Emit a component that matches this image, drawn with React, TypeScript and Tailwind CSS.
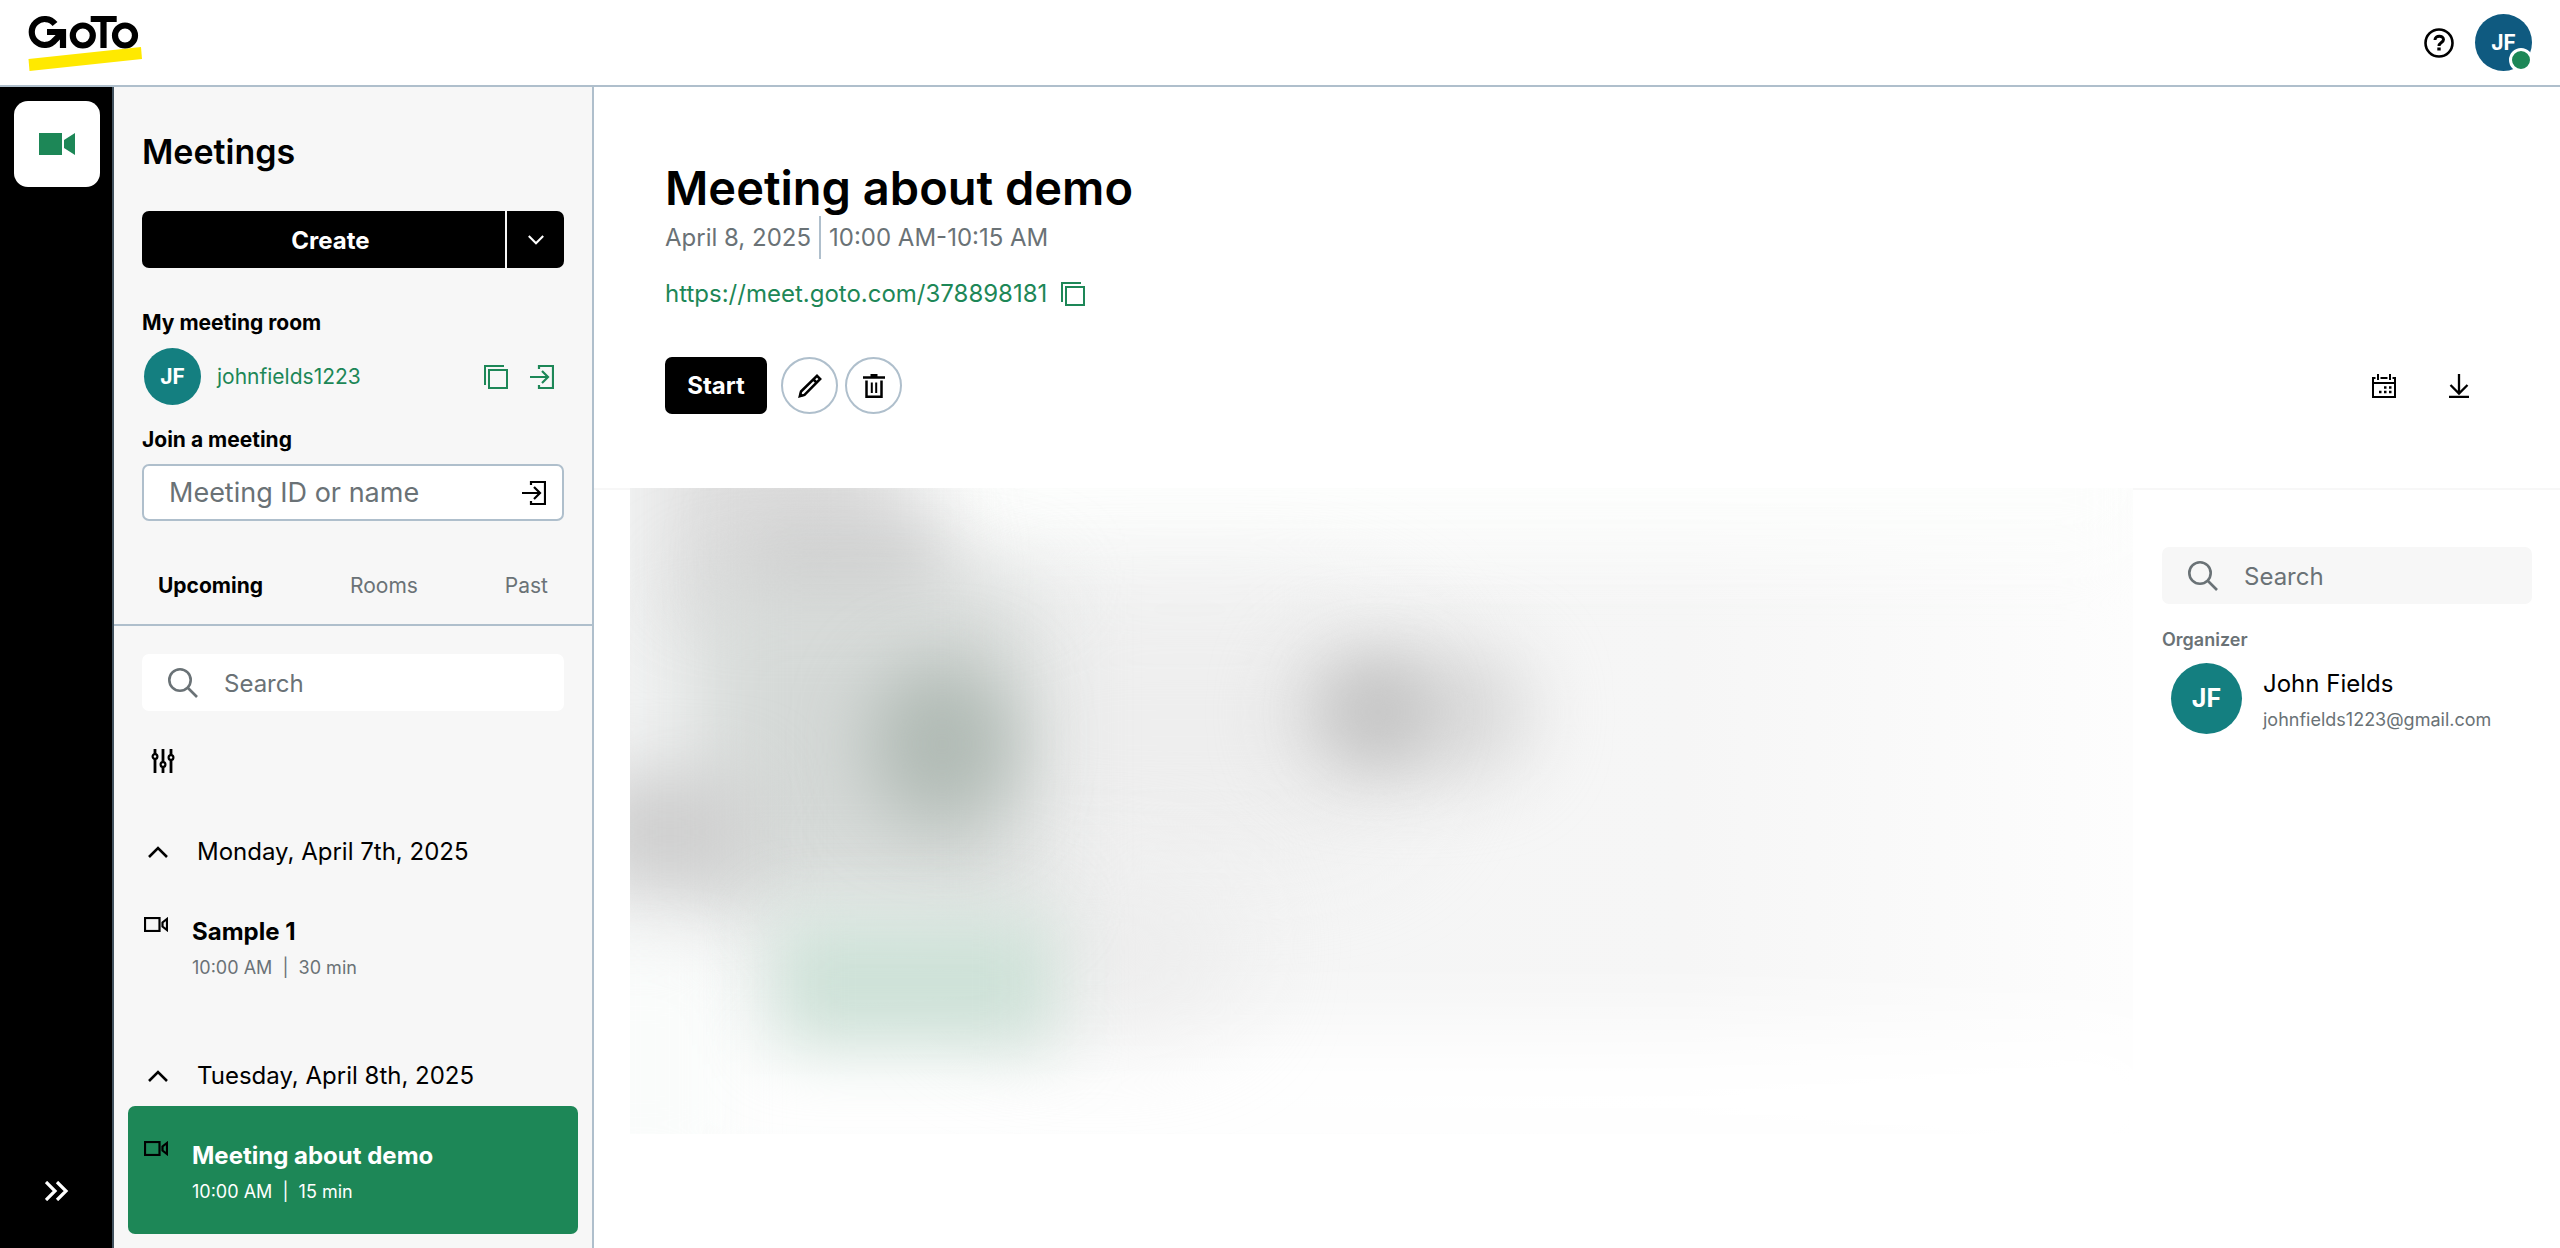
import type { ReactNode } from "react";

type IconProps = { className?: string };

function Logo() {
  return (
    <svg viewBox="0 0 114 58" className="h-[58px] w-[114px]" role="img" aria-label="GoTo">
      <path d="M0.500 45 L113 33 L114 45 L1.500 57 Z" fill="#ffe900" />
      <g fill="none" stroke="#000" strokeWidth="6.2">
        <path d="M27 10 A13 13 0 1 0 27 26 L35 18" />
        <path d="M19 18 H35 V34" />
        <circle cx="54.800" cy="21.500" r="10" />
        <path d="M62.700 5 H88.700 M75.500 5 V34" />
        <circle cx="97" cy="21.500" r="10" />
      </g>
    </svg>
  );
}

function HelpIcon({ className }: IconProps) {
  return (
    <svg viewBox="0 0 30 30" className={className} fill="none" stroke="currentColor" strokeWidth="2.6" aria-hidden="true">
      <circle cx="15" cy="15" r="13.500" />
      <path d="M11 12 C11 7 19.500 7 19.500 11.500 C19.500 14.500 15 14.500 15 18" strokeWidth="3" />
      <path d="M15 19.500 V22.500" strokeWidth="3.4" />
    </svg>
  );
}

function CopyIcon({ className }: IconProps) {
  return (
    <svg viewBox="0 0 24 24" className={className} fill="none" stroke="currentColor" strokeWidth="2" aria-hidden="true">
      <path d="M1 20 V1 H20" />
      <rect x="5" y="5" width="18" height="18" />
    </svg>
  );
}

function EnterIcon({ className }: IconProps) {
  return (
    <svg viewBox="0 0 24 24" className={className} fill="none" stroke="currentColor" strokeWidth="2.2" aria-hidden="true">
      <path d="M9 4 V1 H23 V23 H9 V20" />
      <path d="M0 12 H18 M12 6 L18 12 L12 18" />
    </svg>
  );
}

function SearchIcon({ className }: IconProps) {
  return (
    <svg viewBox="0 0 30 30" className={className} fill="none" stroke="currentColor" strokeWidth="2.6" aria-hidden="true">
      <circle cx="12" cy="12" r="10.700" />
      <path d="M19.500 19.500 L29 29" />
    </svg>
  );
}

function FilterIcon({ className }: IconProps) {
  return (
    <svg viewBox="0 0 24 24" className={className} fill="none" stroke="currentColor" strokeWidth="2.8" aria-hidden="true">
      <path d="M4 0 V5 M4 10 V24 M12 0 V13 M12 18 V24 M20 0 V6 M20 11 V24" />
      <circle cx="4" cy="7.500" r="2.400" strokeWidth="2.2" />
      <circle cx="12" cy="15.500" r="2.400" strokeWidth="2.2" />
      <circle cx="20" cy="8.500" r="2.400" strokeWidth="2.2" />
    </svg>
  );
}

function ChevronIcon({ className }: IconProps) {
  return (
    <svg viewBox="0 0 20 12" className={className} fill="none" stroke="currentColor" strokeWidth="2.6" aria-hidden="true">
      <path d="M1 11 L10 2 L19 11" />
    </svg>
  );
}

function DoubleChevronIcon({ className }: IconProps) {
  return (
    <svg viewBox="0 0 24 20" className={className} fill="none" stroke="currentColor" strokeWidth="3.2" aria-hidden="true">
      <path d="M1 1 L10 10 L1 19 M12 1 L21 10 L12 19" />
    </svg>
  );
}

function CameraOutlineIcon({ className }: IconProps) {
  return (
    <svg viewBox="0 0 24 15" className={className} fill="none" stroke="currentColor" strokeWidth="2.2" aria-hidden="true">
      <rect x="1" y="1" width="14.500" height="13" />
      <path d="M23 2 V13 L18.500 9.500 V5.500 Z" />
    </svg>
  );
}

function CameraIcon({ className }: IconProps) {
  return (
    <svg viewBox="0 0 36 22" className={className} fill="currentColor" aria-hidden="true">
      <path d="M0 0 H23 V22 H0 Z M25 7 L36 0 V22 L25 15 Z" />
    </svg>
  );
}

function PencilIcon({ className }: IconProps) {
  return (
    <svg viewBox="0 0 24 24" className={className} fill="none" stroke="currentColor" strokeWidth="2.5" aria-hidden="true">
      <path d="M1.800 22.200 L3 17.500 L19 1.800 L22.200 5 L6.500 21 Z M15.500 5.500 L18.500 8.500" />
      <path d="M1 23 L2 18 L6 22 Z" fill="currentColor" stroke="none" />
    </svg>
  );
}

function TrashIcon({ className }: IconProps) {
  return (
    <svg viewBox="0 0 24 24" className={className} fill="none" stroke="currentColor" strokeWidth="2.5" aria-hidden="true">
      <path d="M8.500 0 H15.500 V3 H8.500 Z" fill="currentColor" stroke="none" />
      <path d="M1 3.500 H23 M4.500 6.500 V22.800 H19.500 V6.500" />
      <path d="M9.800 8.500 V19 M14.200 8.500 V19" strokeWidth="2" />
    </svg>
  );
}

function CalendarIcon({ className }: IconProps) {
  return (
    <svg viewBox="0 0 24 24" className={className} fill="none" stroke="currentColor" strokeWidth="2" aria-hidden="true">
      <path d="M3.500 4 H1 V23 H23 V4 H20.500 M8.500 4 H15.500 M1 9 H23 M6 0 V6 M18 0 V6" />
      <path d="M12 13.500 H14.500 M17 13.500 H19.500 M7 18 H9.500 M12 18 H14.500 M17 18 H19.500" strokeWidth="2.5" />
    </svg>
  );
}

function DownloadIcon({ className }: IconProps) {
  return (
    <svg viewBox="0 0 20 24" className={className} fill="none" stroke="currentColor" strokeWidth="2.3" aria-hidden="true">
      <path d="M10 0 V19 M1.500 11 L10 19.500 L18.500 11 M0 22.800 H20" />
    </svg>
  );
}

function SearchBox({ id, label, className }: { id: string; label: string; className: string }) {
  return (
    <div className={`flex h-[57px] items-center gap-[26px] rounded-[7px] pl-[26px] ${className}`}>
      <SearchIcon className="h-[30px] w-[30px] shrink-0 text-[#6a7276]" />
      <input
        id={id}
        type="search"
        aria-label={label}
        placeholder="Search"
        className="h-full w-full min-w-0 bg-transparent pt-[2px] text-[24px] outline-none placeholder:text-[#6a7276]"
      />
    </div>
  );
}

function DayHeading({ children }: { children: ReactNode }) {
  return (
    <button type="button" className="flex h-10 w-full items-center gap-[29px] pl-5 text-left text-[24px]">
      <ChevronIcon className="h-3 w-5" />
      {children}
    </button>
  );
}

type MeetingProps = { title: string; time: string; length: string; selected?: boolean };

function MeetingCard({ title, time, length, selected }: MeetingProps) {
  return (
    <button
      type="button"
      className={`flex h-32 w-full items-start gap-6 rounded-[7px] px-4 pt-[34px] text-left ${
        selected ? "bg-[#1d8757] text-white" : "text-black"
      }`}
    >
      <CameraOutlineIcon className="mt-px h-[15px] w-6 text-black" />
      <span className="flex flex-col">
        <span className="text-[24px] leading-8 font-bold">{title}</span>
        <span className={`mt-2 text-[18px] leading-6 whitespace-pre ${selected ? "text-white" : "text-[#6a7276]"}`}>
          {time}  |  {length}
        </span>
      </span>
    </button>
  );
}

function BlurredPreview() {
  return (
    <div
      className="relative -mt-[2px] h-[646px] overflow-hidden bg-linear-to-r from-[#f3f4f4] from-0% via-[#f6f6f6] via-70% to-[#fdfdfd]"
      aria-hidden="true"
    >
      <div className="absolute -right-10 -bottom-10 left-0 h-36 bg-white blur-[45px]" />
      <div className="absolute -top-20 left-80 h-36 w-[1200px] bg-[#fcfdfc] blur-[40px]" />
      <div className="absolute top-28 left-80 h-64 w-[480px] rounded-full bg-[#eeeeee] blur-[50px]" />
      <div className="absolute top-[380px] left-80 h-40 w-72 rounded-full bg-[#ededed] blur-[50px]" />
      <div className="absolute -top-20 left-8 h-56 w-56 bg-[#dedede] blur-[35px]" />
      <div className="absolute top-6 left-28 h-28 w-52 rounded-full bg-[#d0d0d0] blur-[36px]" />
      <div className="absolute top-24 left-16 h-[320px] w-[340px] bg-[#d5d9d7] blur-[45px]" />
      <div className="absolute top-44 left-60 h-40 w-36 rounded-full bg-[#b0bab4] blur-[36px]" />
      <div className="absolute top-72 -left-10 h-28 w-40 bg-[#cecece] blur-[35px]" />
      <div className="absolute -bottom-10 -left-20 h-56 w-44 bg-[#fafcfb] blur-[35px]" />
      <div className="absolute top-[430px] left-36 h-32 w-[280px] bg-[#cde1d7] blur-[34px]" />
      <div className="absolute top-40 left-[660px] h-32 w-60 rounded-full bg-[#d8d8d8] blur-[38px]" />
      <div className="absolute top-44 left-[700px] h-24 w-24 rounded-full bg-[#c4c4c4] blur-[30px]" />
    </div>
  );
}

function Sidebar() {
  return (
    <aside className="flex w-[480px] shrink-0 flex-col border-r-2 border-[#afbfcc] bg-[#f7f7f7]">
      <div className="flex flex-col px-7">
        <h1 className="mt-[44px] text-[34px] leading-[42px] font-semibold">Meetings</h1>
        <div className="mt-[38px] flex h-[57px] gap-[2px]">
          <button type="button" className="flex-1 rounded-l-[7px] bg-black pt-[2px] pl-[14px] text-[24px] font-bold text-white">
            Create
          </button>
          <button type="button" aria-label="More create options" className="flex w-[57px] items-center justify-center rounded-r-[7px] bg-black text-white">
            <ChevronIcon className="h-[10px] w-4 rotate-180" />
          </button>
        </div>
        <h2 className="mt-[39px] text-[21px] leading-8 font-bold">My meeting room</h2>
        <div className="mt-[9px] flex h-[57px] items-center pl-[2px]">
          <span className="flex size-[57px] items-center justify-center rounded-full bg-[#147f80] text-[21px] font-bold text-white">
            JF
          </span>
          <a href="#room" className="ml-4 flex-1 text-[21px] text-[#1d8757]">
            johnfields1223
          </a>
          <button type="button" aria-label="Copy room link" className="text-[#1d8757]">
            <CopyIcon className="size-6" />
          </button>
          <button type="button" aria-label="Enter room" className="mr-[10px] ml-[22px] text-[#1d8757]">
            <EnterIcon className="size-6" />
          </button>
        </div>
        <label htmlFor="meeting-id" className="mt-[19px] text-[21px] leading-8 font-bold">
          Join a meeting
        </label>
        <div className="mt-2 flex h-[57px] items-center rounded-[7px] border-2 border-[#afbfcc] bg-white pr-4 pl-[25px]">
          <input
            id="meeting-id"
            type="text"
            placeholder="Meeting ID or name"
            className="h-full w-full min-w-0 bg-transparent text-[27px] outline-none placeholder:text-[#6a7276]"
          />
          <button type="button" aria-label="Join">
            <EnterIcon className="size-6" />
          </button>
        </div>
      </div>
      <nav className="mt-[26px] flex h-[77px] items-center justify-between px-11 text-[21px] text-[#6a7276]">
        <button type="button" className="font-bold text-black">Upcoming</button>
        <button type="button">Rooms</button>
        <button type="button">Past</button>
      </nav>
      <div className="border-t-2 border-[#afbfcc] px-[14px] pt-7">
        <div className="px-[14px]">
          <SearchBox id="meeting-search" label="Search meetings" className="bg-white" />
          <button type="button" aria-label="Filter" className="mt-[38px] ml-[9px] block">
            <FilterIcon className="size-6" />
          </button>
        </div>
        <div className="mt-[59px]">
          <DayHeading>Monday, April 7th, 2025</DayHeading>
          <div className="mt-[10px] mb-[46px]">
            <MeetingCard title="Sample 1" time="10:00 AM" length="30 min" />
          </div>
          <DayHeading>Tuesday, April 8th, 2025</DayHeading>
          <div className="mt-[10px]">
            <MeetingCard title="Meeting about demo" time="10:00 AM" length="15 min" selected />
          </div>
        </div>
      </div>
    </aside>
  );
}

function Details() {
  return (
    <main className="flex min-w-0 flex-1 flex-col">
      <section className="border-b-2 border-[#f7f7f7] pt-[72px] pr-[91px] pb-[74px] pl-[71px]">
        <h2 className="text-[47px] leading-[57px] font-semibold">Meeting about demo</h2>
        <div className="flex h-[43px] items-center gap-2 text-[24px] text-[#6a7276]">
          <span>April 8, 2025</span>
          <span className="h-full w-[2px] bg-[#afbfcc]" />
          <span>10:00 AM-10:15 AM</span>
        </div>
        <div className="mt-[15px] flex h-10 items-center gap-[14px] text-[24px] text-[#1d8757]">
          <a href="https://meet.goto.com/378898181">https://meet.goto.com/378898181</a>
          <button type="button" aria-label="Copy meeting link">
            <CopyIcon className="size-6" />
          </button>
        </div>
        <div className="mt-[43px] flex items-center">
          <button type="button" className="h-[57px] w-[102px] rounded-[7px] bg-black text-[24px] font-bold text-white">
            Start
          </button>
          <button type="button" aria-label="Edit" className="ml-[14px] flex size-[57px] items-center justify-center rounded-full border-2 border-[#afbfcc]">
            <PencilIcon className="size-6" />
          </button>
          <button type="button" aria-label="Delete" className="ml-[7px] flex size-[57px] items-center justify-center rounded-full border-2 border-[#afbfcc]">
            <TrashIcon className="size-6" />
          </button>
          <span className="flex-1" />
          <button type="button" aria-label="Add to calendar">
            <CalendarIcon className="size-6" />
          </button>
          <button type="button" aria-label="Download" className="ml-[53px]">
            <DownloadIcon className="h-6 w-5" />
          </button>
        </div>
      </section>
      <div className="flex flex-1">
        <div className="min-w-0 flex-1 pl-9">
          <BlurredPreview />
        </div>
        <section className="w-[427px] shrink-0 pt-[57px] pr-7 pl-[29px]">
          <SearchBox id="people-search" label="Search attendees" className="bg-[#f7f7f7]" />
          <h3 className="mt-6 text-[18px] leading-6 font-semibold text-[#6a7276]">Organizer</h3>
          <div className="mt-[11px] flex items-center gap-[21px] pl-[9px]">
            <span className="flex size-[71px] items-center justify-center rounded-full bg-[#147f80] text-[25px] font-bold text-white">
              JF
            </span>
            <div className="pt-[2px]">
              <p className="text-[24px] leading-8">John Fields</p>
              <p className="mt-2 text-[18px] leading-6 text-[#6a7276]">johnfields1223@gmail.com</p>
            </div>
          </div>
        </section>
      </div>
    </main>
  );
}

export default function App() {
  return (
    <div className="flex min-h-screen flex-col bg-white font-['Inter',sans-serif] text-black">
      <header className="flex h-[87px] items-center border-b-2 border-[#afbfcc] px-7">
        <a href="#home" aria-label="Home">
          <Logo />
        </a>
        <span className="flex-1" />
        <button type="button" aria-label="Help">
          <HelpIcon className="size-[30px]" />
        </button>
        <button type="button" aria-label="Account" className="relative ml-[21px] flex size-[57px] items-center justify-center rounded-full bg-[#0f5a80] text-[21px] font-bold text-white">
          JF
          <span className="absolute -right-px -bottom-px size-6 rounded-full border-3 border-white bg-[#1d8757]" />
        </button>
      </header>
      <div className="flex flex-1">
        <nav className="flex w-[114px] shrink-0 flex-col items-center justify-between border-r-2 border-[#42525e] bg-black pt-[14px] pb-[47px] pl-[2px]">
          <button type="button" aria-label="Meetings" className="flex size-[86px] items-center justify-center rounded-[14px] bg-white text-[#1d8757]">
            <CameraIcon className="h-[22px] w-9" />
          </button>
          <button type="button" aria-label="Expand menu" className="text-white">
            <DoubleChevronIcon className="h-5 w-6" />
          </button>
        </nav>
        <Sidebar />
        <Details />
      </div>
    </div>
  );
}
